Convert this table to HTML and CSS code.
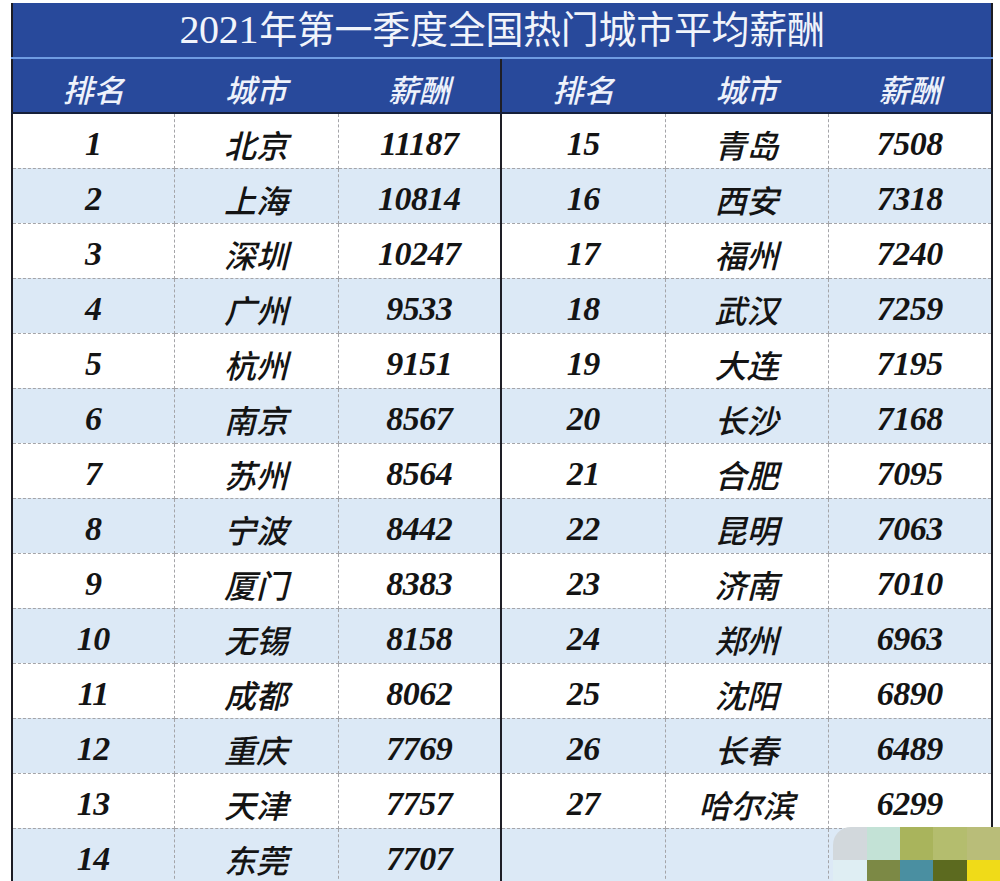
FILE: index.html
```html
<!DOCTYPE html>
<html lang="zh-CN">
<head>
<meta charset="utf-8">
<title>2021年第一季度全国热门城市平均薪酬</title>
<link rel="stylesheet" href="styles.css">
</head>
<body>
<div class="page">
  <table class="salary">
    <colgroup>
      <col class="c1"><col class="c2"><col class="c3"><col class="c4"><col class="c5"><col class="c6">
    </colgroup>
    <thead>
      <tr class="title-row"><th colspan="6"><span class="num">2021</span>年第一季度全国热门城市平均薪酬</th></tr>
      <tr class="head-row">
        <th>排名</th><th>城市</th><th class="mid">薪酬</th>
        <th>排名</th><th>城市</th><th>薪酬</th>
      </tr>
    </thead>
    <tbody>
      <tr class="odd"><td class="num">1</td><td class="city">北京</td><td class="num mid">11187</td><td class="num">15</td><td class="city">青岛</td><td class="num">7508</td></tr>
      <tr class="even"><td class="num">2</td><td class="city">上海</td><td class="num mid">10814</td><td class="num">16</td><td class="city">西安</td><td class="num">7318</td></tr>
      <tr class="odd"><td class="num">3</td><td class="city">深圳</td><td class="num mid">10247</td><td class="num">17</td><td class="city">福州</td><td class="num">7240</td></tr>
      <tr class="even"><td class="num">4</td><td class="city">广州</td><td class="num mid">9533</td><td class="num">18</td><td class="city">武汉</td><td class="num">7259</td></tr>
      <tr class="odd"><td class="num">5</td><td class="city">杭州</td><td class="num mid">9151</td><td class="num">19</td><td class="city">大连</td><td class="num">7195</td></tr>
      <tr class="even"><td class="num">6</td><td class="city">南京</td><td class="num mid">8567</td><td class="num">20</td><td class="city">长沙</td><td class="num">7168</td></tr>
      <tr class="odd"><td class="num">7</td><td class="city">苏州</td><td class="num mid">8564</td><td class="num">21</td><td class="city">合肥</td><td class="num">7095</td></tr>
      <tr class="even"><td class="num">8</td><td class="city">宁波</td><td class="num mid">8442</td><td class="num">22</td><td class="city">昆明</td><td class="num">7063</td></tr>
      <tr class="odd"><td class="num">9</td><td class="city">厦门</td><td class="num mid">8383</td><td class="num">23</td><td class="city">济南</td><td class="num">7010</td></tr>
      <tr class="even"><td class="num">10</td><td class="city">无锡</td><td class="num mid">8158</td><td class="num">24</td><td class="city">郑州</td><td class="num">6963</td></tr>
      <tr class="odd"><td class="num">11</td><td class="city">成都</td><td class="num mid">8062</td><td class="num">25</td><td class="city">沈阳</td><td class="num">6890</td></tr>
      <tr class="even"><td class="num">12</td><td class="city">重庆</td><td class="num mid">7769</td><td class="num">26</td><td class="city">长春</td><td class="num">6489</td></tr>
      <tr class="odd"><td class="num">13</td><td class="city">天津</td><td class="num mid">7757</td><td class="num">27</td><td class="city">哈尔滨</td><td class="num">6299</td></tr>
      <tr class="even"><td class="num">14</td><td class="city">东莞</td><td class="num mid">7707</td><td></td><td></td><td></td></tr>
    </tbody>
  </table>
  <div class="mosaic" aria-hidden="true">
    <span class="m m1"></span><span class="m m2"></span><span class="m m3"></span><span class="m m4"></span><span class="m m5"></span>
    <span class="m m6"></span><span class="m m7"></span><span class="m m8"></span><span class="m m9"></span><span class="m m10"></span>
  </div>
</div>
</body>
</html>
```

FILE: styles.css
```css
html, body {
  margin: 0;
  padding: 0;
  background: #ffffff;
}

.page {
  position: relative;
  width: 1000px;
  height: 881px;
  overflow: hidden;
  padding: 3px 0 0 11px;
  box-sizing: border-box;
}

.salary {
  border-collapse: collapse;
  table-layout: fixed;
  width: 980px;
  border-left: 2px solid #1c1c24;
  border-right: 2px solid #1c1c24;
}

.c1 { width: 162px; }
.c2 { width: 164px; }
.c3 { width: 163px; }
.c4 { width: 164px; }
.c5 { width: 163px; }
.c6 { width: 164px; }

.title-row th {
  height: 55px;
  padding: 0 0 2px 0;
  box-sizing: border-box;
  background: #28499b;
  color: #f1f4fb;
  font-family: "Noto Sans CJK SC", sans-serif;
  font-weight: 400;
  font-size: 38px;
  line-height: 1;
  text-align: center;
  border-bottom: 2px solid #6f9be2;
  vertical-align: middle;
  letter-spacing: -0.3px;
}

.title-row .num {
  font-family: "Liberation Serif", "Noto Sans CJK SC", serif;
  font-size: 40px;
  font-style: normal;
  font-weight: 400;
  margin-right: 1px;
}

.head-row th {
  height: 55px;
  padding: 6px 0 0 0;
  box-sizing: border-box;
  background: #28499b;
  color: #eef2fb;
  font-family: "Noto Sans CJK SC", sans-serif;
  font-weight: 500;
  font-style: italic;
  font-size: 31px;
  line-height: 1;
  text-align: center;
  border-bottom: 2px solid #16203a;
}

td {
  height: 55px;
  padding: 7px 0 0 0;
  box-sizing: border-box;
  text-align: center;
  vertical-align: middle;
  color: #141414;
  border-bottom: 1px dashed #a4a4a8;
  border-right: 1px dashed #a4a4a8;
  line-height: 1;
}

.head-row th.mid,
td.mid {
  border-right: 2px solid #1e1e26;
}

tr.odd td { background: #ffffff; }
tr.even td { background: #dce9f6; }

td.num {
  font-family: "Liberation Serif", serif;
  font-weight: 700;
  font-style: italic;
  font-size: 34px;
  letter-spacing: -0.5px;
}

td.city {
  font-family: "Noto Sans CJK SC", sans-serif;
  font-weight: 500;
  font-style: italic;
  font-size: 32px;
}

.mosaic {
  position: absolute;
  left: 833px;
  top: 827px;
  width: 167px;
  height: 54px;
  display: grid;
  grid-template-columns: 34px 33px 33px 34px 33px;
  grid-template-rows: 33px 21px;
}

.m { display: block; }
.m1 { background: #d2d8dc; border-top-left-radius: 18px; }
.m2 { background: #c3e2d6; }
.m3 { background: #a9b45c; }
.m4 { background: #b4bd6e; }
.m5 { background: #b9bd79; }
.m6 { background: #dfeef3; }
.m7 { background: #7c8945; }
.m8 { background: #4a8fa1; }
.m9 { background: #5c6a1f; }
.m10 { background: #f0db18; }
```
